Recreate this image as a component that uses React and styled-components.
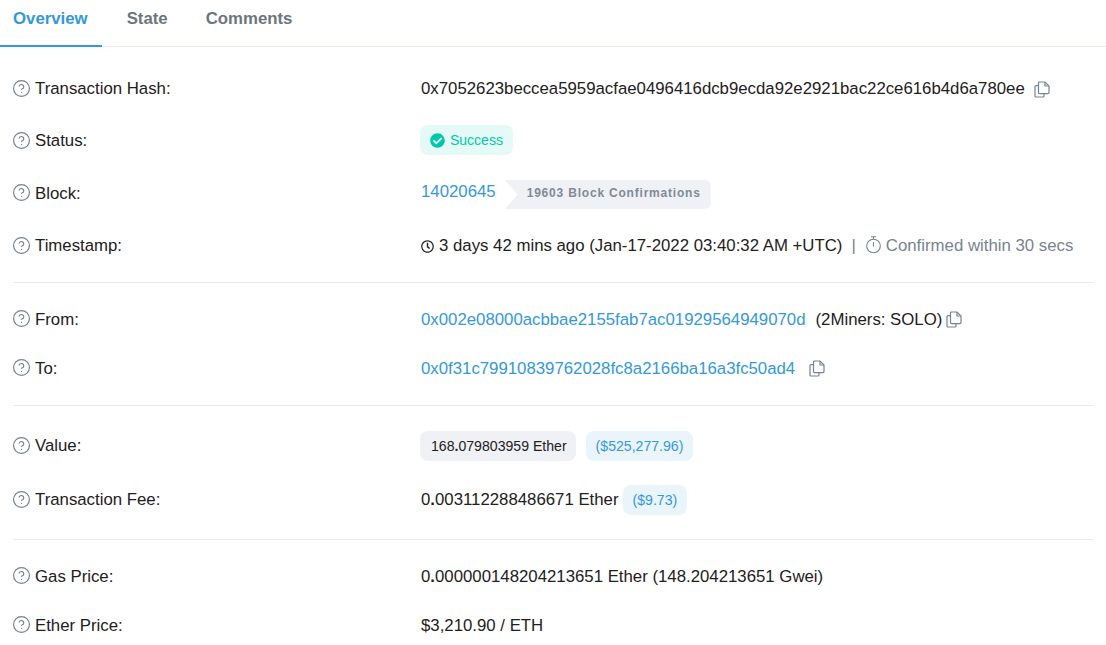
import React from 'react'
import styled, { createGlobalStyle } from 'styled-components'
import { CircleHelp } from 'lucide-react'
import { FaCheckCircle, FaRegClock } from 'react-icons/fa'

const GlobalStyle = createGlobalStyle`
  html, body {
    margin: 0;
    padding: 0;
    background: #fff;
    overflow: hidden;
  }
  body {
    font-family: "Liberation Sans", Arial, sans-serif;
    font-size: 16.8px;
    color: #1e2022;
  }
`

const Page = styled.div`
  width: 1106px;
`

const Tabs = styled.nav`
  display: flex;
  height: 46px;
  border-bottom: 1px solid #e7eaf3;
`

const Tab = styled.div`
  display: flex;
  align-items: center;
  box-sizing: border-box;
  height: 47px;
  margin-bottom: -1px;
  margin-right: ${props => props.$gap}px;
  padding: 0 ${props => props.$pad}px 8px 13px;
  font-weight: 700;
  font-size: 16.8px;
  color: ${props => (props.$active ? '#3498db' : '#6c757e')};
  border-bottom: 2px solid ${props => (props.$active ? '#3498db' : 'transparent')};
`

const Section = styled.section`
  padding: ${props => props.$top}px 0 ${props => props.$bottom}px;
  margin: 0 13px;
  border-bottom: ${props => (props.$last ? 'none' : '1px solid #e7eaf3')};
`

const Row = styled.div`
  display: grid;
  grid-template-columns: 408px 1fr;
  align-items: center;
  height: ${props => props.$h}px;
`

const Label = styled.div`
  display: flex;
  align-items: center;
  gap: 4.5px;
  color: #1e2022;
`

const Value = styled.div`
  display: flex;
  align-items: center;
  white-space: nowrap;
`

const HelpIcon = styled(CircleHelp)`
  color: #77838f;
  flex: none;
  margin: 0 0 2px -1.5px;
`

const Link = styled.a`
  color: #3498db;
  text-decoration: none;
`

const BlockLink = styled(Link)`
  margin-bottom: 4px;
`

const CopyButton = styled.svg`
  flex: none;
  margin-left: ${props => props.$gap}px;
  color: #77838f;
`

const StatusPill = styled.span`
  display: inline-flex;
  align-items: center;
  gap: 5px;
  height: 30px;
  margin: 0 0 2px -1px;
  padding: 0 10px;
  border-radius: 8px;
  background: rgba(0, 201, 167, 0.1);
  color: #00c9a7;
  font-size: 14px;
`

const ConfirmTag = styled.span`
  display: inline-flex;
  align-items: center;
  box-sizing: border-box;
  height: 29px;
  margin: 2px 0 0 9px;
  padding: 0 10px 3px 22px;
  background: #eff1f4;
  color: #7f8a96;
  font-size: 12px;
  font-weight: 700;
  letter-spacing: 0.8px;
  border-radius: 0 6px 6px 0;
  clip-path: polygon(0 0, 100% 0, 100% 100%, 0 100%, 13px 50%);
`

const ClockIcon = styled(FaRegClock)`
  color: #1e2022;
  margin-right: 5px;
`

const Muted = styled.span`
  color: #77838f;
  display: inline-flex;
  align-items: center;
`

const Divider = styled(Muted)`
  margin: 0 9px;
`

const StopwatchIcon = styled.svg`
  flex: none;
  margin: -2px 5px 0 1px;
`

const Pill = styled.span`
  display: inline-flex;
  align-items: center;
  height: 30px;
  padding: 0 10px;
  border-radius: 8px;
  font-size: 14.1px;
  background: rgba(52, 152, 219, 0.1);
  color: #3498db;
  margin-left: ${props => props.$gap}px;
`

const GrayPill = styled(Pill)`
  padding: 0 9px 0 11px;
  background: #eff1f4;
  color: #1e2022;
`

const Named = styled.span`
  margin-left: 10px;
`

const CopyIcon = ({ gap }) => (
  <CopyButton $gap={gap} width="16" height="17" viewBox="0 0 16 17" fill="none" stroke="currentColor" strokeWidth="1.2">
    <path d="M4.5 4.6H2a1 1 0 0 0-1 1V15a1 1 0 0 0 1 1h7a1 1 0 0 0 1-1v-2.4" />
    <path d="M11 1H5.5a1 1 0 0 0-1 1v9.6a1 1 0 0 0 1 1H14a1 1 0 0 0 1-1V5L11 1Z" />
    <path d="M11 1v4h4" />
  </CopyButton>
)

const Field = ({ label, h, children }) => (
  <Row $h={h}>
    <Label>
      <HelpIcon size={19} strokeWidth={1.5} />
      {label}
    </Label>
    <Value>{children}</Value>
  </Row>
)

export default function App() {
  return (
    <Page>
      <GlobalStyle />
      <Tabs>
        <Tab $active $pad={14} $gap={12}>Overview</Tab>
        <Tab $pad={13} $gap={12}>State</Tab>
        <Tab $pad={13} $gap={0}>Comments</Tab>
      </Tabs>

      <Section $top={16} $bottom={10}>
        <Field label="Transaction Hash:" h={52}>
          0x7052623beccea5959acfae0496416dcb9ecda92e2921bac22ce616b4d6a780ee
          <CopyIcon gap={9} />
        </Field>
        <Field label="Status:" h={52}>
          <StatusPill>
            <FaCheckCircle size={15} />
            Success
          </StatusPill>
        </Field>
        <Field label="Block:" h={53}>
          <BlockLink href="#">14020645</BlockLink>
          <ConfirmTag>19603 Block Confirmations</ConfirmTag>
        </Field>
        <Field label="Timestamp:" h={52}>
          <ClockIcon size={13} />
          3 days 42 mins ago (Jan-17-2022 03:40:32 AM +UTC)
          <Divider>|</Divider>
          <Muted>
            <StopwatchIcon width="15" height="18" viewBox="0 0 15 18" fill="none" stroke="currentColor" strokeWidth="1.1">
              <circle cx="7.5" cy="10" r="6.8" />
              <path d="M5 .8h5M7.5 .8v2.4M7.5 6v4.5" />
            </StopwatchIcon>
            Confirmed within 30 secs
          </Muted>
        </Field>
      </Section>

      <Section $top={12} $bottom={12}>
        <Field label="From:" h={49}>
          <Link href="#">0x002e08000acbbae2155fab7ac01929564949070d</Link>
          <Named>(2Miners: SOLO)</Named>
          <CopyIcon gap={4} />
        </Field>
        <Field label="To:" h={49}>
          <Link href="#">0x0f31c79910839762028fc8a2166ba16a3fc50ad4</Link>
          <CopyIcon gap={14} />
        </Field>
      </Section>

      <Section $top={13} $bottom={12}>
        <Field label="Value:" h={54}>
          <GrayPill $gap={-1}>168<b>.</b>079803959 Ether</GrayPill>
          <Pill $gap={10}>($525,277.96)</Pill>
        </Field>
        <Field label="Transaction Fee:" h={54}>
          <span>0<b>.</b>003112288486671 Ether</span>
          <Pill $gap={4}>($9.73)</Pill>
        </Field>
      </Section>

      <Section $top={12} $bottom={0} $last>
        <Field label="Gas Price:" h={49}>
          <span>0<b>.</b>000000148204213651 Ether (148.204213651 Gwei)</span>
        </Field>
        <Field label="Ether Price:" h={49}>
          $3,210.90 / ETH
        </Field>
      </Section>
    </Page>
  )
}
